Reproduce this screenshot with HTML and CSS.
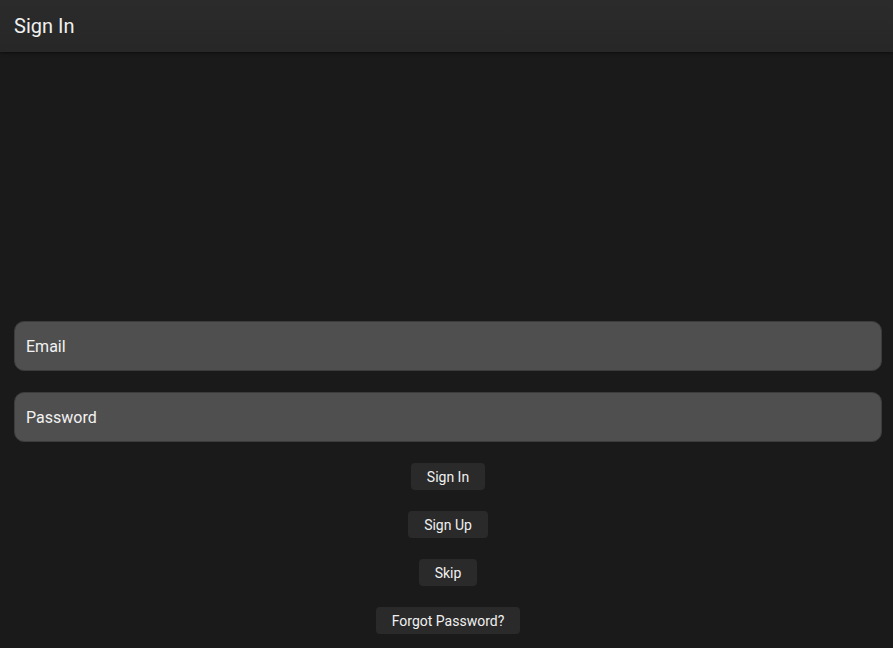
FILE: index.html
```html
<!DOCTYPE html>
<html>
<head>
<meta charset="utf-8">
<link rel="stylesheet" href="styles.css">
</head>
<body>
<header class="topbar"><h1 class="title">Sign In</h1></header>
<main class="content">
  <form class="form">
    <input class="field" type="email" placeholder="Email">
    <input class="field" type="password" placeholder="Password">
    <button class="btn" type="button">Sign In</button>
    <button class="btn" type="button">Sign Up</button>
    <button class="btn" type="button">Skip</button>
    <button class="btn" type="button">Forgot Password?</button>
  </form>
</main>
</body>
</html>
```
FILE: styles.css
```css
html, body {
  margin: 0;
  padding: 0;
  height: 100%;
}
body {
  background: #1a1a1a;
  font-family: Roboto, "Liberation Sans", sans-serif;
  color: #f2f2f2;
  display: flex;
  flex-direction: column;
  overflow: hidden;
}
.topbar {
  height: 52px;
  flex: 0 0 52px;
  background: linear-gradient(#2b2b2b, #272727);
  box-shadow: 0 1px 3px rgba(0,0,0,0.5);
  display: flex;
  align-items: center;
  padding: 0 14px;
  position: relative;
  z-index: 1;
}
.title {
  margin: 0;
  font-size: 20px;
  font-weight: 400;
  color: #f0f0f0;
}
.content {
  flex: 1;
  display: flex;
  flex-direction: column;
  justify-content: flex-end;
  padding: 0 11px 14px 14px;
}
.form {
  display: flex;
  flex-direction: column;
  align-items: center;
  gap: 21px;
}
.field {
  box-sizing: border-box;
  width: 100%;
  height: 50px;
  background: #4f4f4f;
  border: 1px solid #3c3c3c;
  border-radius: 10px;
  padding: 0 11px;
  font-family: Roboto, "Liberation Sans", sans-serif;
  font-size: 16px;
  color: #f2f2f2;
  outline: none;
}
.field::placeholder {
  color: #f2f2f2;
  opacity: 1;
}
.btn {
  height: 27px;
  padding: 0 16px;
  background: #2a2a2a;
  border: none;
  border-radius: 4px;
  color: #f0f0f0;
  font-family: Roboto, "Liberation Sans", sans-serif;
  font-size: 14px;
  cursor: pointer;
}
```
